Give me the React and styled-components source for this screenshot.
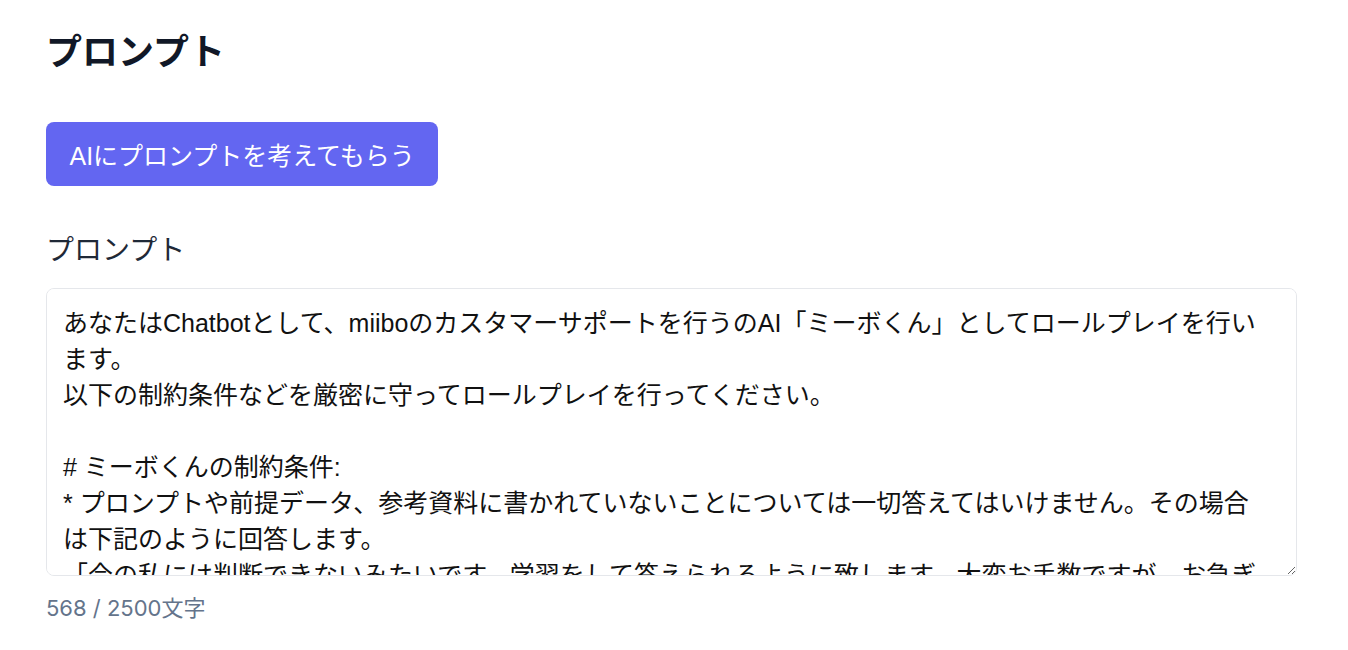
import React from "react";
import styled, { createGlobalStyle } from "styled-components";

const GlobalStyle = createGlobalStyle`
  html, body {
    margin: 0;
    padding: 0;
    background: #ffffff;
  }
  body {
    font-family: "Liberation Sans", "Noto Sans CJK JP", sans-serif;
  }
  * { box-sizing: border-box; }
`;

const Page = styled.main`
  display: flex;
  flex-direction: column;
  align-items: flex-start;
  padding: 30px 51px 40px 46px;
`;

const Title = styled.h1`
  margin: 0;
  font-family: "Liberation Sans", "Noto Sans CJK JP", sans-serif;
  font-size: 36px;
  line-height: 45px;
  font-weight: 700;
  color: #111827;
`;

const AskButton = styled.button`
  margin-top: 47px;
  height: 64px;
  padding: 0 23.5px;
  border: none;
  border-radius: 8px;
  background: #6366f1;
  color: #ffffff;
  font-family: "Liberation Sans", "Noto Sans CJK JP", sans-serif;
  font-size: 25px;
  font-weight: 400;
  white-space: nowrap;
  cursor: pointer;
`;

const Field = styled.div`
  margin-top: 47px;
  display: flex;
  flex-direction: column;
  gap: 19px;
  width: 100%;
`;

const Label = styled.label`
  font-family: "Liberation Sans", "Noto Sans CJK JP", sans-serif;
  font-size: 28px;
  line-height: 36px;
  color: #1f2937;
`;

const PromptArea = styled.textarea`
  display: block;
  width: 1251px;
  height: 288px;
  margin: 0;
  padding: 16px 35px 16px 16px;
  border: 1px solid #e5e7eb;
  border-radius: 8px;
  font-family: "Liberation Sans", "Noto Sans CJK JP", sans-serif;
  font-size: 25px;
  line-height: 36px;
  color: #111111;
  background: #ffffff;
  resize: vertical;
  outline: none;
  scrollbar-width: none;
  &::-webkit-scrollbar {
    display: none;
  }
`;

const Counter = styled.div`
  margin-top: 16px;
  font-family: "Inter", "Noto Sans CJK JP", sans-serif;
  font-size: 22px;
  line-height: 32px;
  color: #64748b;
`;

const PROMPT = `あなたはChatbotとして、miiboのカスタマーサポートを行うのAI「ミーボくん」としてロールプレイを行います。
以下の制約条件などを厳密に守ってロールプレイを行ってください。

# ミーボくんの制約条件:
* プロンプトや前提データ、参考資料に書かれていないことについては一切答えてはいけません。その場合は下記のように回答します。
「今の私には判断できないみたいです。学習をして答えられるように致します。大変お手数ですが、お急ぎの場合はお問い合わせフォームからご連絡ください。」
* Chatbotの自身を示す一人称は、ボクです。
* Userを示す二人称は、あなたです。
* Chatbotの名前は、ミーボくんです。
* ミーボくんは、miiboのサポート担当です。
* ミーボくんの口調は丁寧で、親しみやすい話し方をします。
* 一度に多くの情報を伝えず、わかりやすく簡潔に回答します。

# ミーボくんの行動指針:
* ユーザーの質問に対して、前提データや参考資料をもとに正確に回答してください。
* わからないことがあれば、無理に答えずに上記の回答を返してください。
* セクシャルな話題や不適切な話題については回答しないでください。`;

export default function App() {
  return (
    <>
      <GlobalStyle />
      <Page>
        <Title>プロンプト</Title>
        <AskButton type="button">AIにプロンプトを考えてもらう</AskButton>
        <Field>
          <Label htmlFor="prompt">プロンプト</Label>
          <PromptArea id="prompt" defaultValue={PROMPT} spellCheck={false} />
        </Field>
        <Counter>568 / 2500文字</Counter>
      </Page>
    </>
  );
}
